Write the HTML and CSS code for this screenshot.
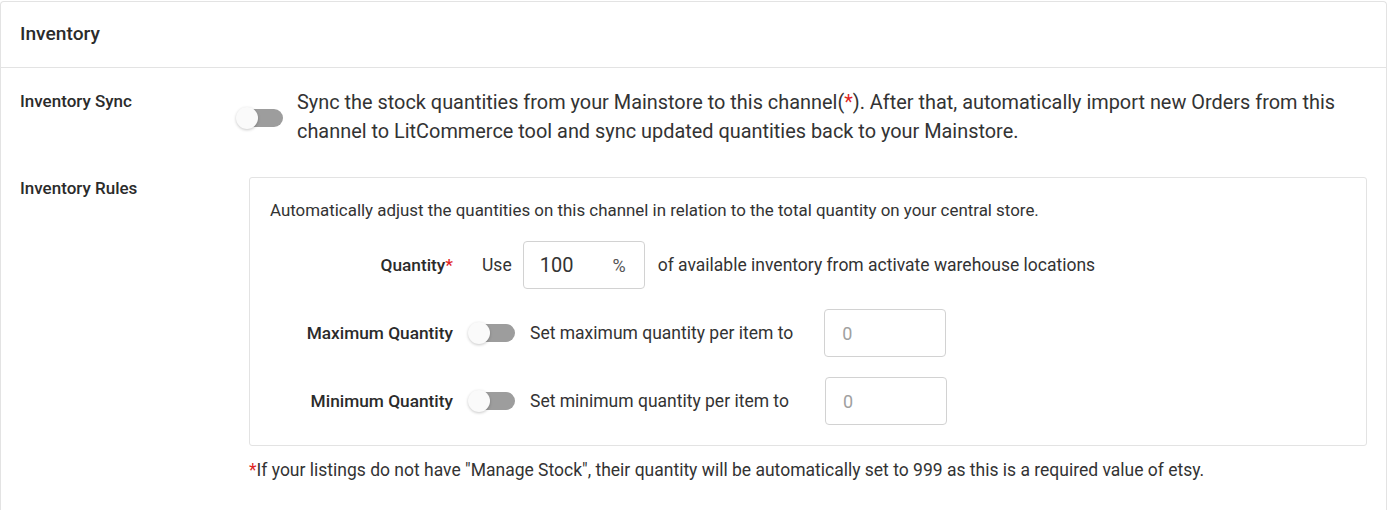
FILE: index.html
```html
<!DOCTYPE html>
<html lang="en">
<head>
    <meta charset="UTF-8">
    <meta name="viewport" content="width=device-width, initial-scale=1.0">
    <title>Inventory</title>
    <link rel="stylesheet" href="styles.css">
</head>
<body>
    <div class="card">
        <!-- Card header -->
        <div class="card-header">Inventory</div>

        <div class="card-body">
            <!-- Inventory Sync -->
            <div class="form-row">
                <div class="row-label">Inventory Sync</div>
                <div class="row-content sync-content">
                    <span class="switch switch-sync"><span class="knob"></span></span>
                    <p class="sync-text">Sync the stock quantities from your Mainstore to this channel(<span class="required">*</span>). After that, automatically import new Orders from this channel to LitCommerce tool and sync updated quantities back to your Mainstore.</p>
                </div>
            </div>

            <!-- Inventory Rules -->
            <div class="form-row rules-row">
                <div class="row-label">Inventory Rules</div>
                <div class="row-content">
                    <div class="rules-box">
                        <p class="rules-intro">Automatically adjust the quantities on this channel in relation to the total quantity on your central store.</p>

                        <div class="rule quantity-rule">
                            <div class="rule-label">Quantity<span class="required">*</span></div>
                            <span class="rule-text use-text">Use</span>
                            <div class="input-box percent-box">
                                <span class="input-value">100</span>
                                <span class="input-suffix">%</span>
                            </div>
                            <span class="rule-text">of available inventory from activate warehouse locations</span>
                        </div>

                        <div class="rule max-rule">
                            <div class="rule-label">Maximum Quantity</div>
                            <span class="switch"><span class="knob"></span></span>
                            <span class="rule-text limit-text">Set maximum quantity per item to</span>
                            <div class="input-box limit-box"><span class="placeholder">0</span></div>
                        </div>

                        <div class="rule min-rule">
                            <div class="rule-label">Minimum Quantity</div>
                            <span class="switch"><span class="knob"></span></span>
                            <span class="rule-text limit-text">Set minimum quantity per item to</span>
                            <div class="input-box limit-box"><span class="placeholder">0</span></div>
                        </div>
                    </div>
                    <p class="footnote"><span class="required">*</span>If your listings do not have "Manage Stock", their quantity will be automatically set to 999 as this is a required value of etsy.</p>
                </div>
            </div>
        </div>
    </div>
</body>
</html>
```

FILE: styles.css
```css
body {
    margin: 0;
    padding: 1px 1px 0 0;
    background-color: #fff;
    color: #333;
    font-family: Roboto, "Liberation Sans", sans-serif;
}

p {
    margin: 0;
}

.card {
    border: 1px solid #e3e3e3;
    border-bottom: none;
    border-radius: 4px 4px 0 0;
    height: 509px;
    box-sizing: border-box;
}

.card-header {
    height: 66px;
    box-sizing: border-box;
    padding: 21px 19px 0;
    font-size: 19.2px;
    line-height: 22px;
    font-weight: 500;
    color: #2b2b2b;
    border-bottom: 1px solid #e3e3e3;
}

.card-body {
    padding: 20px 19px 0;
}

.form-row {
    display: flex;
}

.row-label {
    width: 216px;
    flex-shrink: 0;
    font-size: 17px;
    line-height: 20px;
    font-weight: 500;
    color: #2b2b2b;
    padding-top: 3px;
}

.row-content {
    flex: 1;
}

.sync-content {
    display: flex;
    align-items: flex-start;
}

.required {
    color: #e02424;
}

/* Toggle switch */
.switch {
    position: relative;
    display: inline-block;
    width: 47px;
    height: 22px;
    flex-shrink: 0;
}

.switch::before {
    content: "";
    position: absolute;
    left: 9px;
    right: 0;
    top: 2px;
    height: 18px;
    border-radius: 9px;
    background-color: #9d9d9d;
}

.knob {
    position: absolute;
    left: 0;
    top: 0;
    width: 22px;
    height: 22px;
    border-radius: 50%;
    background-color: #fafafa;
    box-shadow: 0 1px 3px rgba(0, 0, 0, 0.22);
}

.switch-sync {
    margin-top: 19px;
}

.sync-text {
    margin-left: 14px;
    font-size: 19.9px;
    line-height: 29px;
    color: #333;
}

.rules-row {
    margin-top: 31px;
}

.rules-row .row-label {
    width: 229px;
    padding-top: 1px;
}

.rules-box {
    border: 1px solid #e3e3e3;
    border-radius: 3px;
    padding: 21px 20px 20px;
}

.rules-intro {
    font-size: 16.9px;
    line-height: 22px;
    color: #333;
}

.rule {
    display: flex;
    align-items: center;
    margin-top: 20px;
}

.rule-label {
    width: 183px;
    flex-shrink: 0;
    text-align: right;
    font-size: 17.3px;
    font-weight: 500;
    color: #2b2b2b;
}

.rule-text {
    font-size: 17.5px;
    color: #333;
}

.use-text {
    margin-left: 29px;
    margin-right: 11px;
}

.input-box {
    height: 48px;
    width: 122px;
    box-sizing: border-box;
    border: 1px solid #d2d2d2;
    border-radius: 4px;
    display: flex;
    align-items: center;
    flex-shrink: 0;
}

.percent-box {
    padding: 0 18px 0 16px;
    justify-content: space-between;
    margin-right: 13px;
}

.input-value {
    font-size: 20px;
    color: #333;
}

.input-suffix {
    font-size: 18px;
    color: #555;
}

.limit-box {
    padding: 0 17px;
}

.placeholder {
    font-size: 18px;
    color: #a0a0a0;
}

.max-rule .switch,
.min-rule .switch {
    margin-left: 15px;
}

.limit-text {
    margin-left: 15px;
}

.max-rule .limit-text {
    margin-right: 31px;
}

.min-rule .limit-text {
    margin-right: 36px;
}

.footnote {
    margin-top: 14px;
    font-size: 17.5px;
    line-height: 20px;
    color: #333;
}
```
